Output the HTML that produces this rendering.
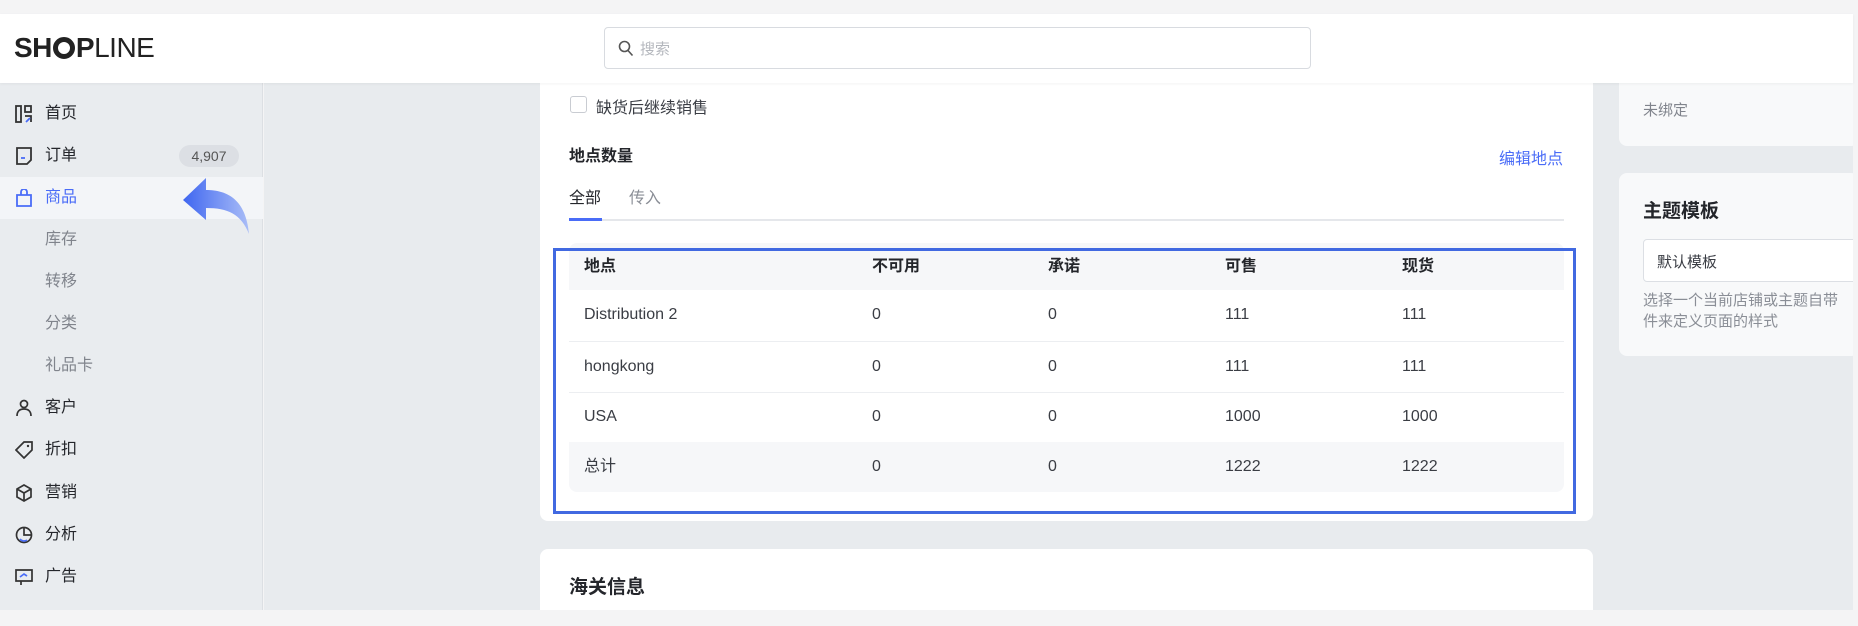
<!DOCTYPE html>
<html><head><meta charset="utf-8"><style>
*{box-sizing:border-box;margin:0;padding:0}
body{width:1858px;height:626px;overflow:hidden;background:#f4f4f5;font-family:"Liberation Sans","Noto Sans CJK SC",sans-serif;color:#24262b;position:relative}
.abs{position:absolute}
#header{left:0;top:14px;width:1853px;height:69px;background:#fff;box-shadow:0 1px 3px rgba(0,0,0,.05);z-index:3}
#side{left:0;top:83px;width:263px;height:527px;background:#e9ecef;border-right:1px solid #dcdfe3}
#main{left:264px;top:83px;width:1589px;height:527px;background:#e8ebee}
.nav{position:absolute;left:0;width:263px;height:42px;font-size:16px}
.nav .ic{position:absolute;left:15px;top:12px;width:18px;height:18px}
.nav .t{position:absolute;left:45px;top:0;height:42px;line-height:42px}
.sub .t{color:#80848c}
.card{position:absolute;background:#fff;border-radius:8px}
.f16{font-size:16px}
table{border-collapse:collapse}
td{line-height:20px;vertical-align:middle}
</style></head><body>
<div id="header" class="abs">
  <div class="abs" style="left:14px;top:19px;font-size:28px;letter-spacing:-0.5px;color:#222;line-height:30px"><b>SH<span style="display:inline-block;width:22px;height:22px;border:5px solid #222;border-radius:50%;vertical-align:-2px;margin:0 1px"></span>P</b><span style="font-weight:400">LINE</span></div>
  <div class="abs" style="left:604px;top:13px;width:707px;height:42px;border:1px solid #d8dbe0;border-radius:4px">
    <svg class="abs" style="left:13px;top:12px" width="16" height="17" viewBox="0 0 16 17"><circle cx="6.5" cy="6.5" r="5" fill="none" stroke="#555" stroke-width="1.6"/><path d="M10 10.5l4.5 5" stroke="#555" stroke-width="1.6"/></svg>
    <span class="abs" style="left:35px;top:10px;font-size:15px;color:#b4b7bd">搜索</span>
  </div>
</div>
<div id="side" class="abs">
  <div class="nav" style="top:10px"><svg class="ic" viewBox="0 0 18 18"><rect x="1" y="1" width="5" height="16" fill="none" stroke="#333" stroke-width="1.8"/><rect x="10" y="1" width="6" height="6" fill="none" stroke="#333" stroke-width="1.8"/><path d="M10 11h6v6" fill="none" stroke="#333" stroke-width="1.8"/><path d="M11 17l4-4" stroke="#4a6cf7" stroke-width="1.8"/></svg><span class="t">首页</span></div>
  <div class="nav" style="top:52px"><svg class="ic" viewBox="0 0 18 18"><path d="M2 1h14v12l-4 4H2z" fill="none" stroke="#333" stroke-width="1.8"/><path d="M6 11h4" stroke="#4a6cf7" stroke-width="1.8"/></svg><span class="t">订单</span>
    <span class="abs" style="left:179px;top:10px;width:60px;height:22px;border-radius:11px;background:#dcdfe4;color:#555;font-size:14px;text-align:center;line-height:22px">4,907</span></div>
  <div class="nav" style="top:94px;background:#f3f5f8"><svg class="ic" viewBox="0 0 18 18"><path d="M2 6h14v11H2z M6 6V3a3 3 0 0 1 6 0v3" fill="none" stroke="#4a6cf7" stroke-width="1.8"/></svg><span class="t" style="color:#4a6cf7">商品</span>
    <svg class="abs" style="left:183px;top:1px" width="68" height="56" viewBox="0 0 68 56"><defs><linearGradient id="g" x1="0" x2="1"><stop offset="0" stop-color="#3f66f0"/><stop offset="1" stop-color="#a9bdf7"/></linearGradient></defs><path d="M0 22L23 0v12c22 0 40 10 43 44C58 36 45 30 23 30v12z" fill="url(#g)"/></svg></div>
  <div class="nav sub" style="top:136px"><span class="t">库存</span></div>
  <div class="nav sub" style="top:178px"><span class="t">转移</span></div>
  <div class="nav sub" style="top:220px"><span class="t">分类</span></div>
  <div class="nav sub" style="top:262px"><span class="t">礼品卡</span></div>
  <div class="nav" style="top:304px"><svg class="ic" viewBox="0 0 18 18"><circle cx="9" cy="5" r="3.5" fill="none" stroke="#333" stroke-width="1.7"/><path d="M2 17c0-5 3-7 7-7s7 2 7 7" fill="none" stroke="#333" stroke-width="1.7"/></svg><span class="t">客户</span></div>
  <div class="nav" style="top:346px"><svg class="ic" viewBox="0 0 18 18"><path d="M1 9L9 1h8v8l-8 8z" fill="none" stroke="#333" stroke-width="1.7"/><circle cx="13" cy="5" r="1.2" fill="#333"/></svg><span class="t">折扣</span></div>
  <div class="nav" style="top:389px"><svg class="ic" viewBox="0 0 18 18"><path d="M9 1l7 4v8l-7 4-7-4V5z M2 5l7 4 7-4 M9 9v8" fill="none" stroke="#333" stroke-width="1.7"/></svg><span class="t">营销</span></div>
  <div class="nav" style="top:431px"><svg class="ic" viewBox="0 0 18 18"><circle cx="9" cy="9" r="7.5" fill="none" stroke="#333" stroke-width="1.7"/><path d="M9 1.5V9h7.5" fill="none" stroke="#333" stroke-width="1.7"/><path d="M5 13a5 5 0 0 0 7 1" stroke="#4a6cf7" stroke-width="1.7" fill="none"/></svg><span class="t">分析</span></div>
  <div class="nav" style="top:473px"><svg class="ic" viewBox="0 0 18 18"><path d="M1 2h16v11H1z M6 13v4" fill="none" stroke="#333" stroke-width="1.7"/><path d="M5 9l4-3 3 2" stroke="#4a6cf7" stroke-width="1.7" fill="none"/></svg><span class="t">广告</span></div>
</div>
<div id="main" class="abs"></div>
<div class="card" style="left:540px;top:70px;width:1053px;height:451px"></div>
<div class="abs" style="left:570px;top:96px;width:17px;height:17px;border:1.5px solid #c9ccd2;border-radius:3px;background:#fff"></div>
<span class="abs f16" style="left:596px;top:94px;color:#3a3d44">缺货后继续销售</span>
<span class="abs f16" style="left:569px;top:142px;font-weight:600">地点数量</span>
<span class="abs f16" style="left:1499px;top:145px;color:#4a6cf7">编辑地点</span>
<span class="abs f16" style="left:569px;top:184px">全部</span>
<span class="abs f16" style="left:629px;top:184px;color:#8a8e96">传入</span>
<div class="abs" style="left:569px;top:219px;width:995px;height:2px;background:#e5e7eb"></div>
<div class="abs" style="left:569px;top:218px;width:33px;height:3px;background:#4a6cf7"></div>
<div class="abs" style="left:569px;top:243px;width:995px;height:249px;border-radius:8px;overflow:hidden;background:#fff">
 <table class="f16" style="width:995px">
  <tr style="height:47px;background:#f6f7f9;font-weight:600"><td style="padding-left:15px;width:303px">地点</td><td style="width:176px">不可用</td><td style="width:177px">承诺</td><td style="width:177px">可售</td><td>现货</td></tr>
  <tr style="height:51px;border-bottom:1px solid #eceef1;color:#3a3d44"><td style="padding-left:15px">Distribution 2</td><td>0</td><td>0</td><td>111</td><td>111</td></tr>
  <tr style="height:51px;border-bottom:1px solid #eceef1;color:#3a3d44"><td style="padding-left:15px">hongkong</td><td>0</td><td>0</td><td>111</td><td>111</td></tr>
  <tr style="height:50px;color:#3a3d44"><td style="padding-left:15px">USA</td><td>0</td><td>0</td><td>1000</td><td>1000</td></tr>
  <tr style="height:50px;background:#f6f7f9;color:#3a3d44"><td style="padding-left:15px">总计</td><td>0</td><td>0</td><td>1222</td><td>1222</td></tr>
 </table>
</div>
<div class="abs" style="left:553px;top:248px;width:1023px;height:266px;border:3px solid #4169e1"></div>
<div class="card" style="left:540px;top:549px;width:1053px;height:70px"></div>
<span class="abs" style="left:569px;top:572px;font-size:19px;font-weight:600">海关信息</span>
<div class="card" style="left:1619px;top:70px;width:240px;height:76px;background:#f8f9fa"></div>
<span class="abs" style="left:1643px;top:99px;font-size:15px;color:#80848c">未绑定</span>
<div class="card" style="left:1619px;top:173px;width:240px;height:183px;background:#f8f9fa"></div>
<span class="abs" style="left:1643px;top:196px;font-size:19px;font-weight:600">主题模板</span>
<div class="abs" style="left:1643px;top:239px;width:220px;height:43px;border:1px solid #dcdfe4;border-radius:4px;background:#fff"></div>
<span class="abs" style="left:1657px;top:251px;font-size:15px;color:#3a3d44">默认模板</span>
<span class="abs" style="left:1643px;top:290px;font-size:15px;color:#8a8e96;line-height:21px;white-space:nowrap">选择一个当前店铺或主题自带<br>件来定义页面的样式</span>
<div class="abs" style="left:0;top:610px;width:1858px;height:16px;background:#f4f4f5"></div>
<div class="abs" style="left:1853px;top:0;width:5px;height:626px;background:#f4f4f5"></div>
</body></html>
